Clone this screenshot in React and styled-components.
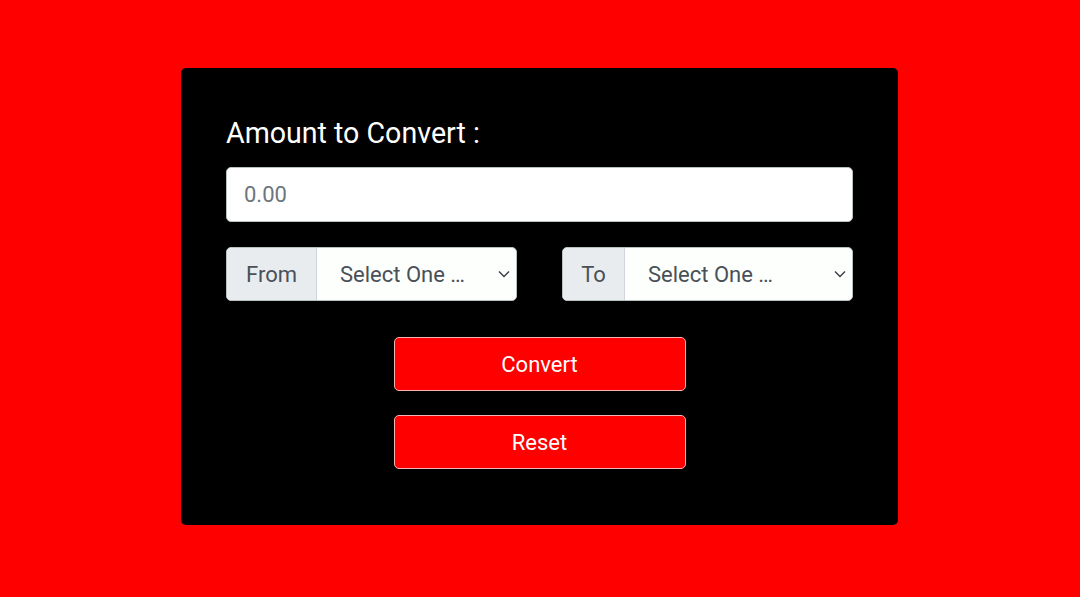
import React from "react";
import styled, { createGlobalStyle } from "styled-components";

const GlobalStyle = createGlobalStyle`
  html, body {
    margin: 0;
    padding: 0;
    background: #ff0000;
    font-family: Roboto, "Liberation Sans", sans-serif;
  }
`;

const Chevron = () => (
  <svg width="12" height="8" viewBox="0 0 12 8" fill="none">
    <path d="M1 1.5l5 5 5-5" stroke="#343a40" strokeWidth="1.3" />
  </svg>
);

function CurrencySelect({ label, prependWidth }) {
  return (
    <Group>
      <Prepend width={prependWidth}>{label}</Prepend>
      <SelectWrap>
        <Select defaultValue="">
          <option value="">Select One …</option>
          <option value="USD">USD</option>
          <option value="EUR">EUR</option>
        </Select>
        <Arrow>
          <Chevron />
        </Arrow>
      </SelectWrap>
    </Group>
  );
}

export default function App() {
  return (
    <Page>
      <GlobalStyle />
      <Card>
        <Label>Amount to Convert :</Label>
        <AmountInput placeholder="0.00" />
        <Row>
          <CurrencySelect label="From" prependWidth={90} />
          <CurrencySelect label="To" prependWidth={62} />
        </Row>
        <Buttons>
          <Button>Convert</Button>
          <Button>Reset</Button>
        </Buttons>
      </Card>
    </Page>
  );
}

// CSS
const Page = styled.div`
  width: 1080px;
  height: 597px;
  display: flex;
  justify-content: flex-start;
  padding: 68px 0 0 181px;
  box-sizing: border-box;
`;
const Card = styled.div`
  width: 717px;
  height: 457px;
  box-sizing: border-box;
  background: #000;
  border-radius: 5px;
  padding: 49px 45px 0 45px;
  display: flex;
  flex-direction: column;
`;
const Label = styled.div`
  color: #fff;
  font-size: 28.6px;
  line-height: 33px;
  margin-bottom: 17px;
`;
const AmountInput = styled.input`
  width: 627px;
  height: 55px;
  box-sizing: border-box;
  border: 1px solid #b9c0c0;
  border-radius: 5px;
  background: #fff;
  padding: 0 17px;
  font-family: Roboto, "Liberation Sans", sans-serif;
  font-size: 22px;
  color: #495057;
  outline: none;
  &::placeholder {
    color: #6c757d;
  }
`;
const Row = styled.div`
  display: grid;
  grid-template-columns: 291px 291px;
  column-gap: 45px;
  margin-top: 25px;
`;
const Group = styled.div`
  display: flex;
  height: 54px;
  box-sizing: border-box;
  border: 1px solid #b9c0c0;
  border-radius: 5px;
  overflow: hidden;
  background: #fdfffd;
`;
const Prepend = styled.div`
  width: ${props => props.width}px;
  flex: none;
  box-sizing: border-box;
  display: flex;
  align-items: center;
  justify-content: center;
  background: #e9ecef;
  border-right: 1px solid #ced4da;
  color: #495057;
  font-size: 22px;
`;
const SelectWrap = styled.div`
  position: relative;
  flex: 1;
`;
const Select = styled.select`
  appearance: none;
  -webkit-appearance: none;
  width: 100%;
  height: 100%;
  border: none;
  background: transparent;
  padding: 0 0 0 23px;
  font-family: Roboto, "Liberation Sans", sans-serif;
  font-size: 22px;
  color: #495057;
  outline: none;
`;
const Arrow = styled.span`
  position: absolute;
  right: 6px;
  top: 50%;
  transform: translateY(-50%);
  display: flex;
  pointer-events: none;
`;
const Buttons = styled.div`
  display: flex;
  flex-direction: column;
  align-items: center;
  gap: 24px;
  margin-top: 36px;
`;
const Button = styled.button`
  width: 292px;
  height: 54px;
  box-sizing: border-box;
  background: #ff0000;
  border: 1px solid #f7b3b3;
  border-radius: 5px;
  color: #fff;
  font-family: Roboto, "Liberation Sans", sans-serif;
  font-size: 22px;
  cursor: pointer;
`;
